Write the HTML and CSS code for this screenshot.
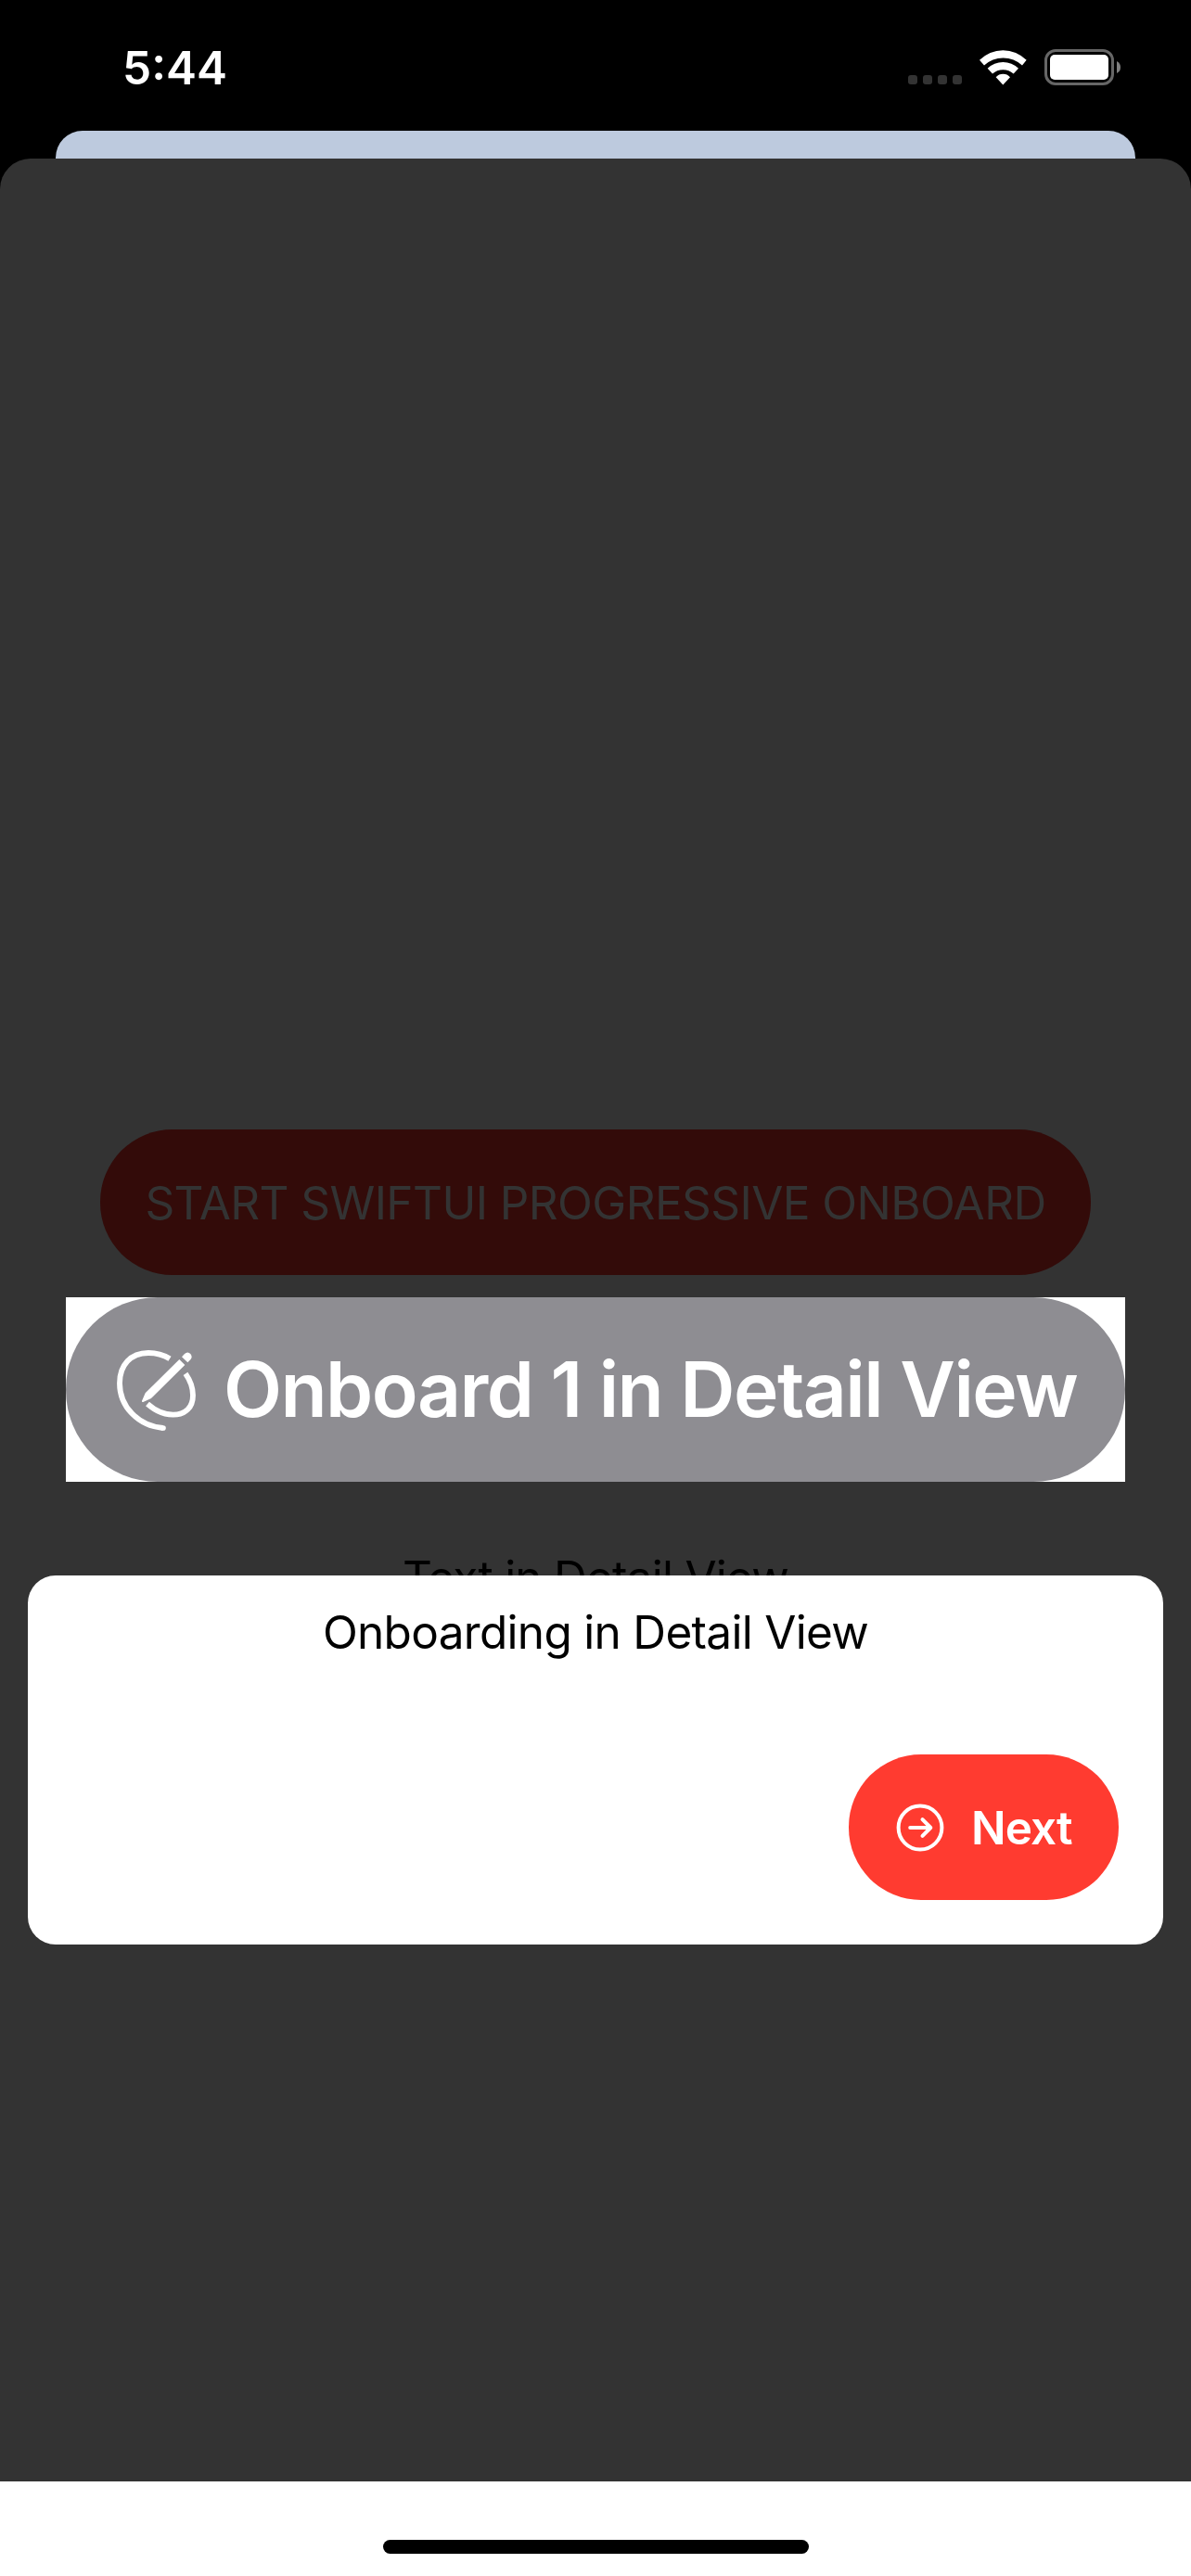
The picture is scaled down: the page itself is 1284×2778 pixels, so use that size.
FILE: index.html
```html
<!DOCTYPE html>
<html lang="en">
<head>
<meta charset="utf-8">
<title>Detail View</title>
<link rel="stylesheet" href="styles.css">
</head>
<body>
<div class="screen">
  <header class="status">
    <div class="time">5:44</div>
    <div class="indicators">
      <div class="dots"><i></i><i></i><i></i><i></i></div>
      <svg class="wifi" viewBox="348 101 153 113"><path d="M348 133A106 106 0 0 1 500 133L486 150A90 90 0 0 0 363 150ZM374 160A72 72 0 0 1 474 160L458 177A51 51 0 0 0 390 177ZM401 188A31 31 0 0 1 447 188L424 213Z"/></svg>
      <svg class="battery" viewBox="0 0 82 39"><rect x="1.5" y="1.5" width="72" height="36" rx="10.5"/><rect class="level" x="6" y="6" width="63" height="27" rx="5"/><path d="M78 13Q82 15 82 19.5T78 26Z"/></svg>
    </div>
  </header>
  <div class="peek"></div>
  <main class="sheet">
    <div class="start">START SWIFTUI PROGRESSIVE ONBOARD</div>
    <div class="spotlight">
      <div class="detail">
        <svg class="pencil" viewBox="0 0 360 360">
          <path class="line" d="M219 79C198 66 176 60 150 60C92 60 57 100 57 158C57 235 118 296 197 303"/>
          <circle cx="198" cy="303" r="8.5"/>
          <path class="line" d="M270 127C284 147 294 172 294 197C294 236 270 260 230 260C200 260 172 247 147 225"/>
          <path d="M250 81L268 99L159 207L133 219Q128 220 129 215L140 190ZM258 73L267 63Q277 54 286 63Q294 73 286 82L277 91Z"/>
        </svg>
        <span class="detail-label">Onboard 1 in Detail View</span>
      </div>
    </div>
    <p class="caption">Text in Detail View</p>
  </main>
  <footer class="home"><div class="bar"></div></footer>
  <section class="card">
    <p class="message">Onboarding in Detail View</p>
    <div class="next">
      <svg class="arrow" viewBox="0 0 52 52"><circle cx="26" cy="26" r="23.4"/><path d="M15.2 26H37M28.5 17.2L37.3 26L28.5 34.8"/></svg>
      <span class="next-label">Next</span>
    </div>
  </section>
</div>
</body>
</html>
```
FILE: styles.css
```css
* { box-sizing: border-box; }
body { margin: 0; background: #000; font-family: Inter, "Liberation Sans", sans-serif; font-size: 49.5px; line-height: 60px; }
p { margin: 0; }
.screen { position: relative; width: 1284px; height: 2778px; display: flex; flex-direction: column; overflow: hidden; }
.status { height: 141px; flex: none; display: flex; justify-content: space-between; align-items: flex-start; padding: 43px 76px 0 132px; color: #fff; }
.time { font-weight: 600; }
.indicators { display: flex; align-items: flex-start; padding-top: 10px; }
.dots { display: flex; gap: 6px; margin: 28px 19px 0 0; }
.dots i { width: 10px; height: 10px; border-radius: 3px; background: #333; }
.wifi { width: 51px; height: 38px; margin: 1px 19px 0 0; fill: #fff; }
.battery { width: 82px; height: 39px; fill: #808080; }
.battery rect { fill: none; stroke: #666; stroke-width: 3; }
.battery .level { fill: #fff; stroke: none; }
.peek { flex: none; height: 60px; margin: 0 60px -30px; border-radius: 29px 29px 0 0; background: #bdcade; }
.sheet { flex: 1; display: flex; flex-direction: column; align-items: center; padding-top: 1047px; border-radius: 33px 33px 0 0; background: #333; }
.start { width: 1068px; height: 157px; padding-top: 1px; border-radius: 78px; background: #330b09; color: #333; display: flex; align-items: center; justify-content: center; white-space: nowrap; letter-spacing: -0.58px; }
.spotlight { width: 1142px; height: 199px; margin-top: 24px; background: #fff; }
.detail { height: 100%; display: flex; align-items: center; padding: 0 0 0 39px; border-radius: 99px; background: #8e8d92; color: #fff; white-space: nowrap; }
.pencil { flex: none; width: 120px; height: 120px; fill: #fff; }
.line { fill: none; stroke: #fff; stroke-width: 17.5; }
.detail-label { font-size: 82px; font-weight: 600; letter-spacing: -1.54px; margin-left: 11px; }
.caption { margin-top: 73px; color: #000; letter-spacing: -0.76px; }
.home { flex: none; height: 102px; padding-top: 63px; background: #fff; }
.bar { width: 459px; height: 15px; margin-left: 413px; border-radius: 8px; background: #000; }
.card { position: absolute; left: 30px; right: 30px; top: 1699px; height: 398px; padding: 31px 48px 48px; border-radius: 30px; background: #fff; display: flex; flex-direction: column; justify-content: space-between; align-items: center; }
.message { letter-spacing: -0.69px; }
.next { align-self: flex-end; width: 291px; height: 157px; border-radius: 78px; background: #ff3b30; color: #fff; display: flex; align-items: center; padding-left: 51px; }
.arrow { width: 52px; height: 52px; fill: none; stroke: #fff; stroke-width: 4; stroke-linecap: round; stroke-linejoin: round; }
.next-label { font-weight: 600; letter-spacing: -0.9px; margin-left: 29px; }
```
